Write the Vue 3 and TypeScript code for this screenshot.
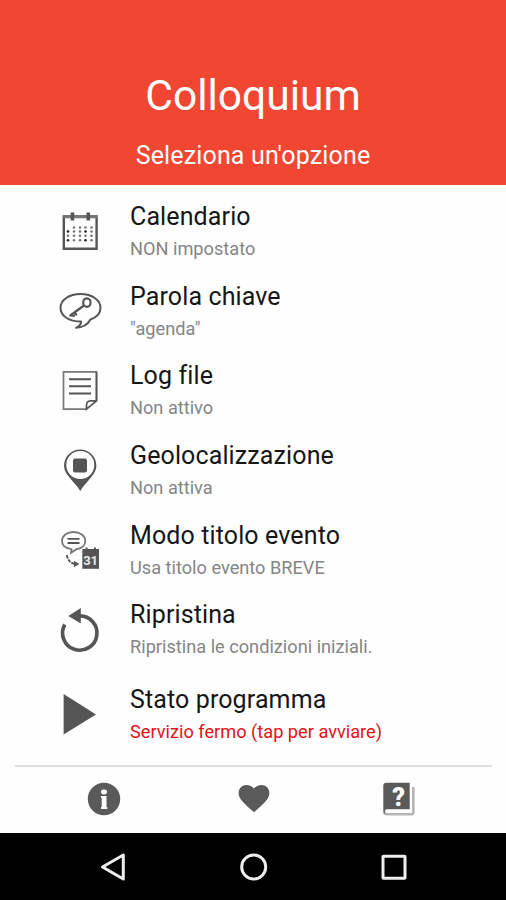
<script setup lang="ts">
type IconName = 'calendar' | 'key' | 'log' | 'pin' | 'event' | 'reset' | 'play'

interface Option {
  icon: IconName
  title: string
  detail: string
  alert?: boolean
}

const options: Option[] = [
  { icon: 'calendar', title: 'Calendario', detail: 'NON impostato' },
  { icon: 'key', title: 'Parola chiave', detail: '"agenda"' },
  { icon: 'log', title: 'Log file', detail: 'Non attivo' },
  { icon: 'pin', title: 'Geolocalizzazione', detail: 'Non attiva' },
  { icon: 'event', title: 'Modo titolo evento', detail: 'Usa titolo evento BREVE' },
  { icon: 'reset', title: 'Ripristina', detail: 'Ripristina le condizioni iniziali.' },
  { icon: 'play', title: 'Stato programma', detail: 'Servizio fermo (tap per avviare)', alert: true },
]

const dotRows = [27.5, 31.5, 35.8, 40.3]
const dotCols = [18, 24, 30, 35.5, 41.5]
const isDark = (r: number, c: number) => (r === 1 || r === 3) && (c === 0 || c === 3)
</script>

<template>
  <div class="screen">
    <header class="header">
      <h1>Colloquium</h1>
      <p>Seleziona un'opzione</p>
    </header>

    <main class="options">
      <div v-for="o in options" :key="o.title" class="option" :class="{ alert: o.alert }">
        <svg class="icon" :class="o.icon" viewBox="0 0 60 60" fill="none" stroke="#555">
          <g v-if="o.icon === 'calendar'">
            <path d="M13.800 16.5V48.800H46.600V16.500" stroke-width="2.400" />
            <path d="M12.600 16.700H47.800" stroke="#777" stroke-width="3.200" />
            <path d="M22.500 12.500V20.500M38.300 12.500V20.500" stroke-width="3.600" />
            <g stroke="none">
              <template v-for="(y, r) in dotRows" :key="y">
                <template v-for="(x, c) in dotCols" :key="x">
                  <circle v-if="r > 0 || c > 0" :cx="x" :cy="y" r="1.300" :fill="isDark(r, c) ? '#222' : '#777'" />
                </template>
              </template>
            </g>
          </g>
          <g v-else-if="o.icon === 'key'" stroke-width="2" stroke-linejoin="round">
            <path d="M31 41.500C19 41.500 10.500 36 10.500 27.800C10.500 20 19 14 30.500 14S50.500 20 50.500 27.800C50.500 33.500 46.500 37.500 40.500 39.500C38 44 34 47.500 26 47.800C29.500 46 31.500 44 31 41.500Z" />
            <ellipse cx="36.900" cy="22.600" rx="3.700" ry="4.300" stroke-width="2.200" />
            <path d="M34 25.500L20.300 35.500L24.800 36M23.500 32.800L27 35" stroke-width="2.200" />
          </g>
          <g v-else-if="o.icon === 'log'" stroke-width="1.700">
            <path d="M46.500 41V11.800H13.500V49.200H37" stroke="#777" />
            <path d="M46.500 12V40.800H40.500Q36.500 41 36.500 45V49.200L46.500 40.800" />
            <path d="M19 19.300H41M19 26.300H41M19 33.500H41" stroke-width="2" />
          </g>
          <g v-else-if="o.icon === 'pin'" stroke="none">
            <path d="M30.300 51C25.500 42.500 14 35 14 25.800A16.200 16.200 0 0 1 46.400 25.800C46.400 35 35 42.500 30.300 51Z" fill="#555" />
            <circle cx="30.300" cy="25" r="14" fill="#fff" />
            <rect x="23" y="18.500" width="14" height="14" rx="2" fill="#555" />
          </g>
          <g v-else-if="o.icon === 'event'" stroke-width="1.800">
            <path d="M21.500 29.200C16 28.500 12 25.500 12 20.800C12 15.500 17 12 23.500 12S35.300 15.500 35.300 20.800C35.300 25.500 31.500 28.500 26.500 29.200L21 32.800Z" stroke="#777" />
            <path d="M17.500 18.800H29.500M17.500 23H29.500" />
            <path d="M16.800 35Q18.500 43.300 25 43.800" stroke-dasharray="3.500 1" />
            <path d="M23.800 40.800L29.500 43.900L23.800 47.200Z" fill="#555" stroke="none" />
            <path d="M32.300 29H49V48.800H32.300Z" fill="#555" stroke="none" />
            <path d="M36.500 27.500V31M45 27.500V31" stroke-width="2" />
            <text class="day" x="40.600" y="45.400" text-anchor="middle">31</text>
          </g>
          <g v-else-if="o.icon === 'reset'">
            <path d="M14.800 24.500A17.200 17.200 0 1 0 29 15.800" stroke-width="3.700" />
            <path d="M18.300 16L30.800 8V23.500Z" fill="#555" stroke="none" />
          </g>
          <path v-else d="M13.600 9L46 29.500L13.600 49.500Z" fill="#555" stroke="none" />
        </svg>
        <div class="labels">
          <div class="title">{{ o.title }}</div>
          <div class="detail">{{ o.detail }}</div>
        </div>
      </div>
    </main>

    <footer class="actions">
      <svg viewBox="0 0 40 40">
        <circle cx="20" cy="20" r="16.200" fill="#5a5a5a" />
        <ellipse cx="20" cy="13" rx="3" ry="2.400" fill="#fff" />
        <path d="M17 17H22.500V28H23.300V30H17V28H17.700V19H17Z" fill="#fff" />
      </svg>
      <svg class="heart" viewBox="0 0 40 40">
        <path d="M20 33.200L17.800 31.200C9.500 23.800 4.600 19.500 4.600 13.900C4.600 9.500 8.200 6 12.500 6C15.500 6 18.200 7.400 20 9.600C21.800 7.400 24.500 6 27.500 6C31.900 6 35.400 9.500 35.400 13.900C35.400 19.500 30.500 23.800 22.200 31.200Z" fill="#5a5a5a" />
      </svg>
      <svg viewBox="0 0 40 40">
        <path d="M34.300 8V33.500Q34.300 35.300 32.300 35.300H8Q5.500 35.300 5 33" fill="none" stroke="#b5b5b5" stroke-width="2.600" />
        <path d="M7.500 3.700H30.700V30.300H8Q5.800 30.500 5.800 32L6.500 34.800Q4.300 34 4.300 32V7Q4.300 3.700 7.500 3.700Z" fill="#5a5a5a" />
        <text class="question" x="19.500" y="26.500" text-anchor="middle">?</text>
      </svg>
    </footer>

    <nav class="system">
      <svg viewBox="0 0 40 40"><path d="M29.300 8V32L8.500 20Z" /></svg>
      <svg viewBox="0 0 40 40"><circle cx="19.700" cy="20" r="12" /></svg>
      <svg viewBox="0 0 40 40"><rect x="9" y="9.200" width="22" height="22" rx=".5" /></svg>
    </nav>
  </div>
</template>

<style>
body {
  margin: 0;
  background: #fff;
}
</style>

<style scoped>
.screen {
  display: flex;
  flex-direction: column;
  width: 506px;
  height: 900px;
  overflow: hidden;
  background: #fefefe;
  font-family: Roboto, sans-serif;
}
.header {
  box-sizing: border-box;
  height: 185px;
  padding-top: 70px;
  background: #f04632;
  color: #fff;
  text-align: center;
}
h1 {
  margin: 0;
  font-size: 42.500px;
  font-weight: 400;
  line-height: 52px;
}
.header p {
  margin: 18px 0 0;
  font-size: 25px;
  line-height: 32px;
  letter-spacing: 0.150px;
}
.options {
  display: flex;
  flex-direction: column;
  height: 573px;
  padding-top: 7px;
}
.option {
  display: flex;
  align-items: flex-start;
  height: 79.670px;
  padding-left: 50px;
}
.option.alert {
  padding-top: 5px;
}
.icon {
  flex: none;
  width: 60px;
  height: 60px;
  margin-top: 8px;
}
.icon.log,
.icon.pin,
.icon.event {
  margin-top: 9px;
}
.icon.reset,
.icon.play {
  margin-top: 10px;
}
.labels {
  margin: 8px 0 0 20px;
  white-space: nowrap;
}
.title {
  color: #161616;
  font-size: 25px;
  line-height: 33px;
  letter-spacing: 0.120px;
}
.detail {
  color: #858585;
  font-size: 18.200px;
  line-height: 32px;
}
.alert .detail {
  color: #e31219;
}
.day {
  fill: #e8e8e8;
  stroke: none;
  font-size: 13px;
  font-weight: 700;
}
.question {
  fill: #fff;
  font-size: 25px;
  font-weight: 900;
}
.actions {
  box-sizing: border-box;
  display: flex;
  justify-content: space-between;
  height: 68px;
  margin: 0 14px 0 15px;
  padding: 12px 73px 0 69px;
  border-top: 2px solid #dedede;
}
.actions svg {
  width: 40px;
  height: 40px;
}
.actions .heart {
  margin-left: 5px;
}
.system {
  display: flex;
  flex: 1;
  align-items: center;
  justify-content: space-between;
  padding: 0 92px 0 94px;
  background: #000;
}
.system svg {
  width: 40px;
  height: 40px;
  fill: none;
  stroke: #eee;
  stroke-width: 3;
  stroke-linejoin: round;
}
</style>
